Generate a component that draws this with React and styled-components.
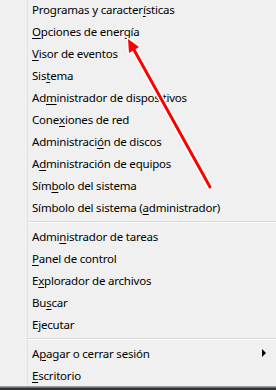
import React from "react";
import styled, { createGlobalStyle } from "styled-components";

const GlobalStyle = createGlobalStyle`
  html, body {
    margin: 0;
    padding: 0;
    background: #f0f0f0;
    overflow: hidden;
  }
`;

const Screen = styled.div`
  position: relative;
  width: 276px;
  height: 390px;
  overflow: hidden;
  background: #f0f0f0;
  font-family: "Noto Sans", "Open Sans", sans-serif;
  font-size: 11.5px;
  letter-spacing: -0.2px;
  color: #000;
`;

const Menu = styled.div`
  display: flex;
  margin-top: -2px;
  border-bottom: 1px solid #a0a0a0;
`;

const Gutter = styled.div`
  width: 27px;
  flex-shrink: 0;
  border-right: 1px solid #e2e3e3;
`;

const List = styled.div`
  flex: 1;
  display: flex;
  flex-direction: column;
`;

const Item = styled.div`
  display: flex;
  align-items: center;
  height: 22px;
  padding: 0 10px 0 4px;
  white-space: nowrap;
`;

const Key = styled.span`
  text-decoration: underline;
  text-underline-offset: 2px;
`;

const SubArrow = styled.span`
  margin-left: auto;
  width: 0;
  height: 0;
  border-top: 4px solid transparent;
  border-bottom: 4px solid transparent;
  border-left: 4px solid #000;
`;

const Separator = styled.div`
  height: 1px;
  margin: 3px 0;
  background: #d7d7d7;
  box-shadow: 0 1px 0 #ffffff;
`;

const Taskbar = styled.div`
  height: 10px;
  background: #2f3233;
  border-top: 1px solid #6a6d6e;
`;

const Annotation = styled.svg`
  position: absolute;
  left: 0;
  top: 0;
  pointer-events: none;
`;

const groups = [
  [
    ["Programas y caracter", "í", "sticas"],
    ["", "O", "pciones de energía"],
    ["", "V", "isor de eventos"],
    ["Sis", "t", "ema"],
    ["Ad", "m", "inistrador de dispositivos"],
    ["Cone", "x", "iones de red"],
    ["Administraci", "ó", "n de discos"],
    ["A", "d", "ministración de equipos"],
    ["Sím", "b", "olo del sistema"],
    ["Símbolo del sistema (", "a", "dministrador)"],
  ],
  [
    ["Admi", "n", "istrador de tareas"],
    ["", "P", "anel de control"],
    ["E", "x", "plorador de archivos"],
    ["Bu", "s", "car"],
    ["E", "j", "ecutar"],
  ],
  [
    ["A", "p", "agar o cerrar sesión", true],
    ["", "E", "scritorio"],
  ],
];

const App = () => (
  <Screen>
    <GlobalStyle />
    <Menu>
      <Gutter />
      <List>
        {groups.map((group, gi) => (
          <React.Fragment key={gi}>
            {gi > 0 && <Separator />}
            {group.map(([pre, key, post, sub]) => (
              <Item key={pre + key + post}>
                {pre}
                <Key>{key}</Key>
                {post}
                {sub && <SubArrow />}
              </Item>
            ))}
          </React.Fragment>
        ))}
      </List>
    </Menu>
    <Taskbar />
    <Annotation width="276" height="390" viewBox="0 0 276 390">
      <g strokeLinecap="round" strokeLinejoin="round">
        <line x1="210" y1="187" x2="133" y2="48" stroke="#fff" strokeWidth="6" />
        <polygon points="128,39 139,47 129,53" fill="#fff" stroke="#fff" strokeWidth="3" />
        <line x1="210" y1="187" x2="133" y2="48" stroke="#ff0000" strokeWidth="3" />
        <polygon points="128,39 139,47 129,53" fill="#ff0000" />
      </g>
    </Annotation>
  </Screen>
);

export default App;
